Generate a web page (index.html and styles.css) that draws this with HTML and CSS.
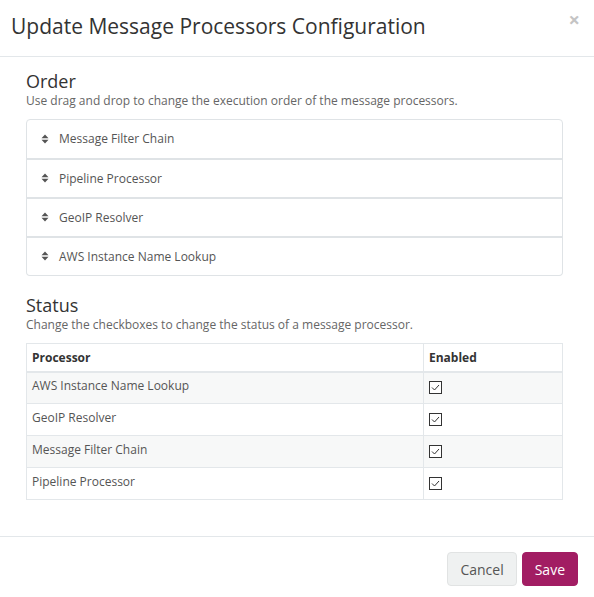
FILE: index.html
```html
<!DOCTYPE html>
<html>
<head>
<meta charset="utf-8">
<link rel="stylesheet" href="styles.css">
</head>
<body>
<div class="modal">
  <div class="modal-header">
    <h4 class="modal-title">Update Message Processors Configuration</h4>
    <span class="close">×</span>
  </div>
  <div class="modal-body">
    <h3 class="section-title">Order</h3>
    <p class="help">Use drag and drop to change the execution order of the message processors.</p>
    <ul class="list-group">
      <li class="list-item"><span class="sort"><svg width="8" height="10" viewBox="0 0 8 10"><path d="M0.5 4.2 L4 0.6 L7.5 4.2 Z M0.5 5.8 L4 9.4 L7.5 5.8 Z" fill="#555"/></svg></span>Message Filter Chain</li>
      <li class="list-item"><span class="sort"><svg width="8" height="10" viewBox="0 0 8 10"><path d="M0.5 4.2 L4 0.6 L7.5 4.2 Z M0.5 5.8 L4 9.4 L7.5 5.8 Z" fill="#555"/></svg></span>Pipeline Processor</li>
      <li class="list-item"><span class="sort"><svg width="8" height="10" viewBox="0 0 8 10"><path d="M0.5 4.2 L4 0.6 L7.5 4.2 Z M0.5 5.8 L4 9.4 L7.5 5.8 Z" fill="#555"/></svg></span>GeoIP Resolver</li>
      <li class="list-item"><span class="sort"><svg width="8" height="10" viewBox="0 0 8 10"><path d="M0.5 4.2 L4 0.6 L7.5 4.2 Z M0.5 5.8 L4 9.4 L7.5 5.8 Z" fill="#555"/></svg></span>AWS Instance Name Lookup</li>
    </ul>
    <h3 class="section-title status-title">Status</h3>
    <p class="help">Change the checkboxes to change the status of a message processor.</p>
    <table class="table">
      <thead>
        <tr><th>Processor</th><th class="col-enabled">Enabled</th></tr>
      </thead>
      <tbody>
        <tr class="odd"><td>AWS Instance Name Lookup</td><td><span class="cb"><svg width="13" height="13" viewBox="0 0 13 13"><rect x="0.5" y="0.5" width="12" height="12" fill="#fff" stroke="#333"/><path d="M3 6.5 L5.5 9 L10 4" fill="none" stroke="#333" stroke-width="1"/></svg></span></td></tr>
        <tr><td>GeoIP Resolver</td><td><span class="cb"><svg width="13" height="13" viewBox="0 0 13 13"><rect x="0.5" y="0.5" width="12" height="12" fill="#fff" stroke="#333"/><path d="M3 6.5 L5.5 9 L10 4" fill="none" stroke="#333" stroke-width="1"/></svg></span></td></tr>
        <tr class="odd"><td>Message Filter Chain</td><td><span class="cb"><svg width="13" height="13" viewBox="0 0 13 13"><rect x="0.5" y="0.5" width="12" height="12" fill="#fff" stroke="#333"/><path d="M3 6.5 L5.5 9 L10 4" fill="none" stroke="#333" stroke-width="1"/></svg></span></td></tr>
        <tr><td>Pipeline Processor</td><td><span class="cb"><svg width="13" height="13" viewBox="0 0 13 13"><rect x="0.5" y="0.5" width="12" height="12" fill="#fff" stroke="#333"/><path d="M3 6.5 L5.5 9 L10 4" fill="none" stroke="#333" stroke-width="1"/></svg></span></td></tr>
      </tbody>
    </table>
  </div>
  <div class="modal-footer">
    <button class="btn btn-default">Cancel</button>
    <button class="btn btn-primary">Save</button>
  </div>
</div>
</body>
</html>
```
FILE: styles.css
```css
* { box-sizing: border-box; }
html, body { margin: 0; padding: 0; background: #fff; }
body {
  font-family: "Open Sans", "DejaVu Sans", sans-serif;
  color: #555;
  font-size: 12px;
}
.modal { width: 594px; height: 597px; display: flex; flex-direction: column; }
.modal-header {
  height: 57px;
  border-bottom: 1px solid #e3e7ea;
  padding: 11px 11px 0 11px;
  display: flex;
  justify-content: space-between;
  align-items: flex-start;
}
.modal-title {
  margin: 0;
  font-size: 21px;
  font-weight: 400;
  color: #333;
  line-height: 30px;
}
.close {
  color: #c4c4c4;
  font-size: 20px;
  font-weight: 700;
  line-height: 20px;
  margin-right: 3px;
  margin-top: -1px;
}
.modal-body {
  padding: 13px 31px 0 26px;
  flex: 1;
}
.section-title {
  margin: 0;
  font-size: 18px;
  font-weight: 400;
  color: #333;
  line-height: 22px;
}
.help {
  margin: 0 0 10px 0;
  line-height: 17px;
  color: #666;
}
.list-group {
  list-style: none;
  margin: 0 0 18px 0;
  padding: 0;
}
.list-item {
  height: 40px;
  border: 1px solid #dfe3e6;
  margin-bottom: -1px;
  padding: 0 15px 1px 14px;
  display: flex;
  align-items: center;
  color: #555;
  font-size: 12px;
}
.list-item:first-child { border-top-left-radius: 4px; border-top-right-radius: 4px; }
.list-item:last-child { border-bottom-left-radius: 4px; border-bottom-right-radius: 4px; margin-bottom: 0; }
.list-item + .list-item { border-top: 2px solid #dfe3e6; }
.sort { display: inline-flex; width: 18px; }
.table {
  width: 100%;
  border-collapse: collapse;
  border: 1px solid #e3e7ea;
  margin-top: 0;
}
.table th, .table td {
  border: 1px solid #e3e7ea;
  padding: 0 5px;
  text-align: left;
  vertical-align: middle;
}
.table th {
  height: 28px;
  font-weight: 700;
  color: #333;
  border-bottom: 2px solid #e3e7ea;
}
.table td { height: 32px; color: #555; padding-bottom: 5px; }
.table td .cb { display: inline-flex; margin-top: 8px; }
.col-enabled { width: 139px; }
.odd td { background: #f7f8f8; }
.modal-footer {
  border-top: 1px solid #e3e7ea;
  height: 61px;
  padding: 15px 16px 0 0;
  display: flex;
  justify-content: flex-end;
  align-items: flex-start;
  gap: 5px;
}
.btn {
  font-family: "Open Sans", "DejaVu Sans", sans-serif;
  font-size: 14px;
  height: 34px;
  border-radius: 4px;
  padding: 0 12px;
  cursor: pointer;
}
.btn-default { background: #eff1f1; border: 1px solid #e1e3e3; color: #555; }
.btn-primary { background: #a21d63; border: 1px solid #a21d63; color: #fff; }
```
